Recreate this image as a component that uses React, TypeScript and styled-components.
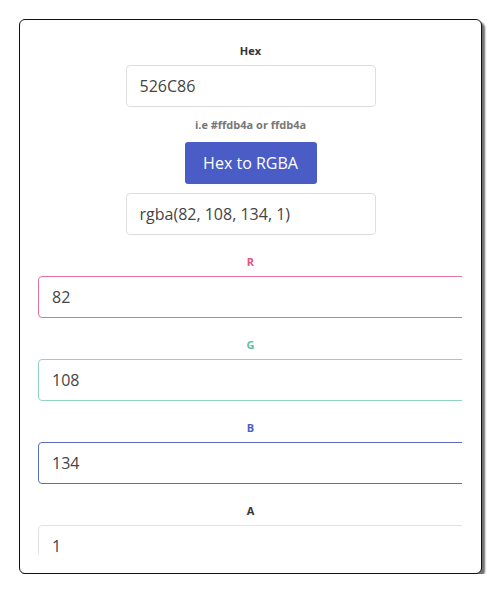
import React from 'react';
import styled, { createGlobalStyle } from 'styled-components';

const GlobalStyle = createGlobalStyle`
  body {
    margin: 0;
    background: #fff;
    font-family: "Open Sans", "Noto Sans", sans-serif;
  }
`

const Card = styled.div`
  box-sizing: border-box;
  margin: 19px 0 0 19px;
  width: 463px;
  height: 555px;
  border: 1px solid #111;
  border-radius: 6px;
  background: #fff;
  box-shadow: 3px 3px 2px #6f6f6f;
  padding-bottom: 19px;
  overflow: hidden;
`

const Scroller = styled.div`
  height: 100%;
  overflow: hidden;
  padding-top: 23px;
  box-sizing: border-box;
  display: flex;
  flex-direction: column;
  align-items: center;
  > * {
    flex-shrink: 0;
  }
`

const Label = styled.label<{ $color?: string; $top?: number }>`
  display: block;
  font-size: 11px;
  line-height: 16px;
  font-weight: 700;
  color: ${p => p.$color || '#333'};
  margin-top: ${p => p.$top ?? 0}px;
  margin-bottom: 6px;
  text-align: center;
`

const TextBox = styled.input`
  box-sizing: border-box;
  width: 250px;
  height: 42px;
  padding: 0 13px;
  border: 1px solid #dedede;
  border-radius: 4px;
  font-family: inherit;
  font-size: 16px;
  color: #444;
  outline: none;
  background: #fff;
`

const Hint = styled.div`
  font-size: 11px;
  line-height: 14px;
  font-weight: 700;
  color: #777;
  margin: 11px 0 10px;
`

const Button = styled.button`
  width: 132px;
  height: 42px;
  border: none;
  border-radius: 3px;
  background: #4a5dc6;
  color: #fff;
  font-family: inherit;
  font-size: 16px;
  cursor: pointer;
`

const Field = styled.div`
  align-self: stretch;
  display: flex;
  flex-direction: column;
  align-items: center;
`

const Clip = styled.div`
  align-self: stretch;
  margin: 0 19px 0 18px;
  overflow: hidden;
`

const ChannelBox = styled(TextBox)<{ $border: string }>`
  display: block;
  width: calc(100% + 20px);
  border-color: ${p => p.$border};
`

const channels = [
  { name: 'R', value: '82', color: '#e0547d', border: '#e27396' },
  { name: 'G', value: '108', color: '#5cbf9a', border: '#8ed5b9' },
  { name: 'B', value: '134', color: '#4a5fc4', border: '#5a6cc6' },
  { name: 'A', value: '1', color: '#333', border: '#e2e2e2' },
];

export default function App() {
  return (
    <>
      <GlobalStyle />
      <Card>
        <Scroller>
          <Label>Hex</Label>
          <TextBox defaultValue="526C86" />
          <Hint>i.e #ffdb4a or ffdb4a</Hint>
          <Button>Hex to RGBA</Button>
          <TextBox defaultValue="rgba(82, 108, 134, 1)" style={{ marginTop: 9 }} />
          {channels.map(c => (
            <Field key={c.name}>
              <Label $color={c.color} $top={19}>{c.name}</Label>
              <Clip>
                <ChannelBox $border={c.border} defaultValue={c.value} />
              </Clip>
            </Field>
          ))}
        </Scroller>
      </Card>
    </>
  );
}
